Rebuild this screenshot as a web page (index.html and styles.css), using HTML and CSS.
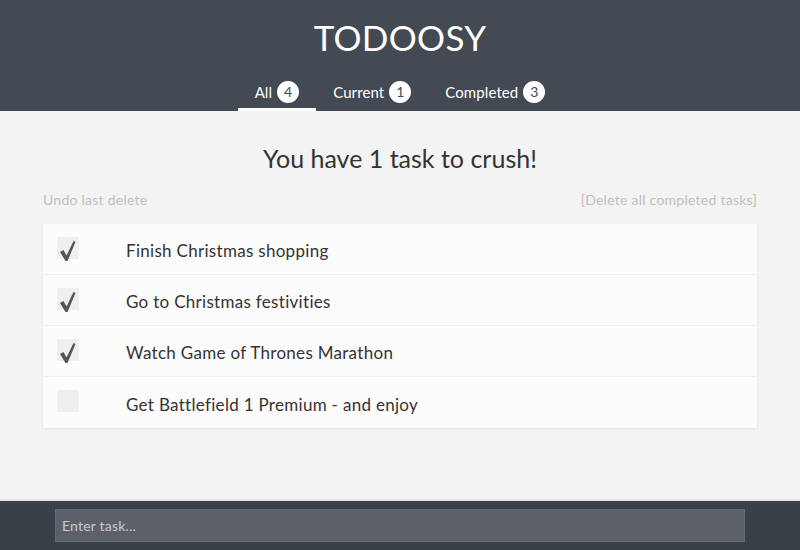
FILE: index.html
```html
<!DOCTYPE html>
<html>
<head>
<meta charset="utf-8">
<link rel="stylesheet" href="styles.css">
</head>
<body>
<header class="header">
  <h1 class="title">TODOOSY</h1>
  <nav class="tabs">
    <a class="tab active">All <span class="badge">4</span></a>
    <a class="tab">Current <span class="badge">1</span></a>
    <a class="tab">Completed <span class="badge">3</span></a>
  </nav>
</header>
<main class="main">
  <h2 class="summary">You have 1 task to crush!</h2>
  <div class="actions">
    <span class="link">Undo last delete</span>
    <span class="link">[Delete all completed tasks]</span>
  </div>
  <ul class="list">
    <li class="item"><span class="check"><svg viewBox="0 0 22 24" width="22" height="24"><path d="M3 13 L6.5 11 L9.5 16.5 L16.5 2 L18.5 3 L10.5 22 L8.5 22 Z" fill="#555"/></svg></span><span class="text">Finish Christmas shopping</span></li>
    <li class="item"><span class="check"><svg viewBox="0 0 22 24" width="22" height="24"><path d="M3 13 L6.5 11 L9.5 16.5 L16.5 2 L18.5 3 L10.5 22 L8.5 22 Z" fill="#555"/></svg></span><span class="text">Go to Christmas festivities</span></li>
    <li class="item"><span class="check"><svg viewBox="0 0 22 24" width="22" height="24"><path d="M3 13 L6.5 11 L9.5 16.5 L16.5 2 L18.5 3 L10.5 22 L8.5 22 Z" fill="#555"/></svg></span><span class="text">Watch Game of Thrones Marathon</span></li>
    <li class="item"><span class="check"></span><span class="text">Get Battlefield 1 Premium - and enjoy</span></li>
  </ul>
</main>
<footer class="footer">
  <input class="input" type="text" placeholder="Enter task...">
</footer>
</body>
</html>
```
FILE: styles.css
```css
* { box-sizing: border-box; }
html, body { margin: 0; padding: 0; height: 100%; }
body {
  font-family: "Lato", "Noto Sans", sans-serif;
  background: #f3f3f3;
  display: flex;
  flex-direction: column;
  width: 800px;
  height: 550px;
  overflow: hidden;
}
.header {
  background: #434a54;
  height: 111px;
  display: flex;
  flex-direction: column;
  align-items: center;
}
.title {
  margin: 17px 0 0;
  font-weight: 400;
  font-size: 35px;
  line-height: 40px;
  color: #fff;
  letter-spacing: 0.3px;
}
.tabs {
  margin-top: 22px;
  display: flex;
}
.tab {
  color: #fff;
  font-size: 15px;
  height: 32px;
  padding: 2px 17px 0;
  display: flex;
  align-items: flex-start;
  gap: 5px;
  line-height: 22px;
  border-bottom: 3px solid transparent;
  letter-spacing: 0.1px;
}
.tab.active { border-bottom-color: #fff; }
.badge {
  display: inline-flex;
  align-items: center;
  justify-content: center;
  width: 22px;
  height: 22px;
  border-radius: 50%;
  background: #fff;
  color: #434a54;
  font-size: 14px;
}
.main {
  flex: 1;
  padding: 0 43px;
}
.summary {
  margin: 32px 0 0;
  text-align: center;
  font-weight: 400;
  font-size: 25px;
  line-height: 30px;
  color: #333;
}
.actions {
  display: flex;
  justify-content: space-between;
  margin-top: 17px;
  font-size: 14px;
  color: #c0c0c0;
  line-height: 20px;
  letter-spacing: 0.25px;
}
.list {
  list-style: none;
  margin: 14px 0 0;
  padding: 0;
  background: #fcfcfc;
  box-shadow: 0 1px 2px rgba(0,0,0,0.08);
}
.item {
  height: 51px;
  display: flex;
  align-items: center;
  padding-left: 14px;
  border-bottom: 1px solid #f0f0f0;
}
.item:last-child { border-bottom: none; }
.check {
  width: 22px;
  height: 22px;
  background: #efefef;
  flex: none;
  display: flex;
  align-items: flex-start;
  margin-top: -3px;
}
.check svg { margin-top: 2px; }
.text {
  margin-left: 47px;
  margin-top: 3px;
  font-size: 17px;
  color: #333;
  letter-spacing: 0.3px;
}
.footer {
  height: 51px;
  background: #3a4048;
  border-top: 2px solid #e6e6e6;
  padding: 8px 55px 0;
}
.input {
  display: block;
  width: 690px;
  height: 33px;
  background: #5c6169;
  border: 1px solid #666b72;
  padding: 0 6px;
  color: #fff;
  font-family: inherit;
  font-size: 14px;
  letter-spacing: 0.2px;
  outline: none;
}
.input::placeholder { color: #c8cacd; }
```
